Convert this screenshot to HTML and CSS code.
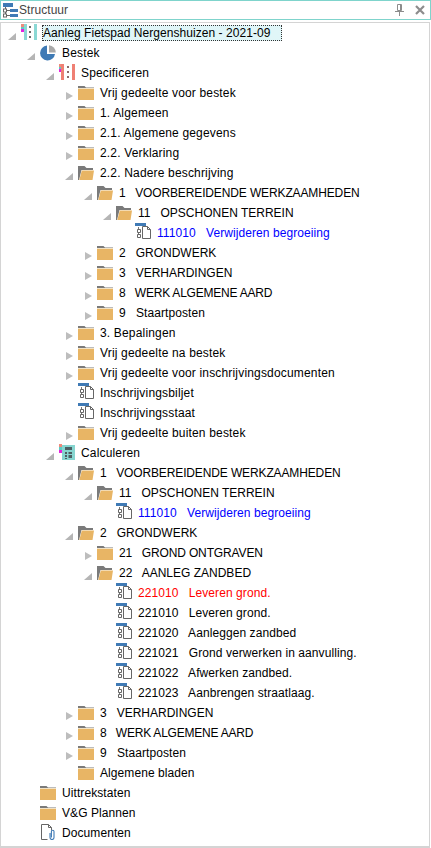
FILE: index.html
```html
<!DOCTYPE html>
<html lang="nl">
<head>
<meta charset="utf-8">
<title>Structuur</title>
<link rel="stylesheet" href="styles.css">
</head>
<body>
<svg class="defs" width="0" height="0">
  <defs>
    <symbol id="folder" viewBox="0 0 16 16">
      <path d="M0 1h6.500l1.500 1.500H16V3H0z" fill="#7a7a7a"/>
      <path d="M0 3h16v1H0z" fill="#f2e2c4"/>
      <path d="M0 4h16v11H0z" fill="#e8b565"/>
    </symbol>
    <symbol id="folder-open" viewBox="0 0 16 16">
      <path d="M0 1h6.500l2 2H15v2H3.500L1 15H0z" fill="#7a7a7a"/>
      <path d="M3.800 5.500H16L14.500 15H1.300z" fill="#e8b565"/>
    </symbol>
    <symbol id="doc" viewBox="0 0 16 16">
      <rect x="0" y="0" width="11" height="3" fill="#3f7ab5"/>
      <path d="M7.500 3.500h5l3 3v9h-8z" fill="#fff" stroke="#666"/>
      <path d="M12.500 3.500v3h3" fill="none" stroke="#666"/>
      <path d="M3.500 4v10" fill="none" stroke="#777"/>
      <path d="M2.500 6.500h3v3h-3zM2.500 11.500h3v3h-3z" fill="#fff" stroke="#666"/>
    </symbol>
    <symbol id="project" viewBox="0 0 16 16">
      <rect x="0" y="0" width="3" height="3" fill="#ef8a7c"/>
      <rect x="0" y="3" width="3" height="2" fill="#5fc9c3"/>
      <rect x="0" y="5" width="3" height="3" fill="#e61fe0"/>
      <rect x="3" y="0" width="3" height="16" fill="#8bd8d4"/>
      <rect x="13" y="0" width="3" height="16" fill="#8bd8d4"/>
      <rect x="8" y="2" width="2" height="2" fill="#6b6b6b"/>
      <rect x="8" y="7" width="2" height="2" fill="#6b6b6b"/>
      <rect x="8" y="12" width="2" height="2" fill="#6b6b6b"/>
    </symbol>
    <symbol id="spec" viewBox="0 0 16 16">
      <rect x="0" y="0" width="2" height="3" fill="#ef8a7c"/>
      <rect x="0" y="3" width="2" height="2" fill="#5fc9c3"/>
      <rect x="0" y="5" width="2" height="3" fill="#e61fe0"/>
      <rect x="2" y="0" width="3" height="16" fill="#ef8074"/>
      <rect x="13" y="0" width="3" height="16" fill="#ef8074"/>
      <rect x="8" y="2" width="2" height="2" fill="#8a6a6a"/>
      <rect x="8" y="7" width="2" height="2" fill="#8a6a6a"/>
      <rect x="8" y="12" width="2" height="2" fill="#8a6a6a"/>
    </symbol>
    <symbol id="pie" viewBox="0 0 16 16">
      <path d="M7 0.500A7.500 7.500 0 1 0 15 9H7z" fill="#3f7ab5"/>
      <path d="M9 0.200A7.500 7.500 0 0 1 15.800 7.500H9z" fill="#a9a9a9"/>
    </symbol>
    <symbol id="calc" viewBox="0 0 16 16">
      <rect x="0" y="0" width="3" height="3" fill="#ef8a7c"/>
      <rect x="0" y="3" width="3" height="3" fill="#5fc9c3"/>
      <rect x="0" y="6" width="3" height="3" fill="#e61fe0"/>
      <rect x="3" y="1" width="13" height="15" fill="#86d5d0"/>
      <rect x="6" y="3" width="7" height="3" fill="#4d5f63"/>
      <path d="M6 8h2v2H6zM9.500 8h3.500v2H9.500zM6 11h2v2H6zM9.500 11h3.500v3H9.500zM6 14h2v1H6z" fill="#4d5f63"/>
    </symbol>
    <symbol id="attach" viewBox="0 0 16 16">
      <path d="M1.500 15.500v-15h7l3 3v3M8.500.5v3h3M1.500 15.500h6" fill="none" stroke="#666"/>
      <path d="M10 9v4.500a2 2 0 0 0 4 0V7.500a1.300 1.300 0 0 0-2.600 0v6" fill="none" stroke="#3f7ab5" stroke-width="1.100"/>
    </symbol>
  </defs>
</svg>

<main class="panel">
  <header class="titlebar">
    <svg class="title-icon" width="16" height="17" viewBox="0 0 16 17">
      <rect x="1" y="1" width="10" height="4" fill="#3f7ab5"/>
      <rect x="8" y="7" width="8" height="3" fill="#3f7ab5"/>
      <rect x="8" y="12" width="8" height="3" fill="#3f7ab5"/>
      <path d="M3.500 5v9M3.500 8.500H8M3.500 13.500H8" fill="none" stroke="#666"/>
      <rect x="1.500" y="7" width="3" height="3" fill="#fff" stroke="#666"/>
      <rect x="1.500" y="12" width="3" height="3" fill="#fff" stroke="#666"/>
    </svg>
    <span class="title-text">Structuur</span>
    <svg class="pin" width="9" height="12" viewBox="0 0 9 12">
      <path d="M2.500.5h4v6h-4zM0 7.500h9M4.500 8v4M5.500 1v5" fill="none" stroke="#8c8c8c"/>
    </svg>
    <svg class="close" width="10" height="10" viewBox="0 0 10 10">
      <path d="M1 1l8 8M9 1L1 9" fill="none" stroke="#8c8c8c" stroke-width="2.200"/>
    </svg>
  </header>

  <section class="tree">
    <div class="row l0"><i class="tw open"></i><svg class="ic up1"><use href="#project"/></svg><span class="label selected">Aanleg Fietspad Nergenshuizen - 2021-09</span></div>
    <div class="row l1"><i class="tw open"></i><svg class="ic"><use href="#pie"/></svg><span class="label">Bestek</span></div>
    <div class="row l2"><i class="tw open"></i><svg class="ic up1"><use href="#spec"/></svg><span class="label">Specificeren</span></div>
    <div class="row l3"><i class="tw shut"></i><svg class="ic"><use href="#folder"/></svg><span class="label">Vrij gedeelte voor bestek</span></div>
    <div class="row l3"><i class="tw shut"></i><svg class="ic"><use href="#folder"/></svg><span class="label">1. Algemeen</span></div>
    <div class="row l3"><i class="tw shut"></i><svg class="ic"><use href="#folder"/></svg><span class="label">2.1. Algemene gegevens</span></div>
    <div class="row l3"><i class="tw shut"></i><svg class="ic"><use href="#folder"/></svg><span class="label">2.2. Verklaring</span></div>
    <div class="row l3"><i class="tw open"></i><svg class="ic"><use href="#folder-open"/></svg><span class="label">2.2. Nadere beschrijving</span></div>
    <div class="row l4"><i class="tw open"></i><svg class="ic"><use href="#folder-open"/></svg><span class="label tight">1   VOORBEREIDENDE WERKZAAMHEDEN</span></div>
    <div class="row l5"><i class="tw open"></i><svg class="ic"><use href="#folder-open"/></svg><span class="label caps">11   OPSCHONEN TERREIN</span></div>
    <div class="row l6"><i class="tw"></i><svg class="ic up2"><use href="#doc"/></svg><span class="label item blue">111010   Verwijderen begroeiing</span></div>
    <div class="row l4"><i class="tw shut"></i><svg class="ic"><use href="#folder"/></svg><span class="label caps">2   GRONDWERK</span></div>
    <div class="row l4"><i class="tw shut"></i><svg class="ic"><use href="#folder"/></svg><span class="label caps">3   VERHARDINGEN</span></div>
    <div class="row l4"><i class="tw shut"></i><svg class="ic"><use href="#folder"/></svg><span class="label tighter">8   WERK ALGEMENE AARD</span></div>
    <div class="row l4"><i class="tw shut"></i><svg class="ic"><use href="#folder"/></svg><span class="label item">9   Staartposten</span></div>
    <div class="row l3"><i class="tw shut"></i><svg class="ic"><use href="#folder"/></svg><span class="label">3. Bepalingen</span></div>
    <div class="row l3"><i class="tw shut"></i><svg class="ic"><use href="#folder"/></svg><span class="label">Vrij gedeelte na bestek</span></div>
    <div class="row l3"><i class="tw shut"></i><svg class="ic"><use href="#folder"/></svg><span class="label">Vrij gedeelte voor inschrijvingsdocumenten</span></div>
    <div class="row l3"><i class="tw"></i><svg class="ic up2"><use href="#doc"/></svg><span class="label">Inschrijvingsbiljet</span></div>
    <div class="row l3"><i class="tw"></i><svg class="ic up2"><use href="#doc"/></svg><span class="label">Inschrijvingsstaat</span></div>
    <div class="row l3"><i class="tw shut"></i><svg class="ic"><use href="#folder"/></svg><span class="label">Vrij gedeelte buiten bestek</span></div>
    <div class="row l2"><i class="tw open"></i><svg class="ic up1"><use href="#calc"/></svg><span class="label">Calculeren</span></div>
    <div class="row l3"><i class="tw open"></i><svg class="ic"><use href="#folder-open"/></svg><span class="label tight">1   VOORBEREIDENDE WERKZAAMHEDEN</span></div>
    <div class="row l4"><i class="tw open"></i><svg class="ic"><use href="#folder-open"/></svg><span class="label caps">11   OPSCHONEN TERREIN</span></div>
    <div class="row l5"><i class="tw"></i><svg class="ic up2"><use href="#doc"/></svg><span class="label item blue">111010   Verwijderen begroeiing</span></div>
    <div class="row l3"><i class="tw open"></i><svg class="ic"><use href="#folder-open"/></svg><span class="label caps">2   GRONDWERK</span></div>
    <div class="row l4"><i class="tw shut"></i><svg class="ic"><use href="#folder"/></svg><span class="label tight">21   GROND ONTGRAVEN</span></div>
    <div class="row l4"><i class="tw open"></i><svg class="ic"><use href="#folder-open"/></svg><span class="label caps">22   AANLEG ZANDBED</span></div>
    <div class="row l5"><i class="tw"></i><svg class="ic up2"><use href="#doc"/></svg><span class="label item red">221010   Leveren grond.</span></div>
    <div class="row l5"><i class="tw"></i><svg class="ic up2"><use href="#doc"/></svg><span class="label item">221010   Leveren grond.</span></div>
    <div class="row l5"><i class="tw"></i><svg class="ic up2"><use href="#doc"/></svg><span class="label item">221020   Aanleggen zandbed</span></div>
    <div class="row l5"><i class="tw"></i><svg class="ic up2"><use href="#doc"/></svg><span class="label item">221021   Grond verwerken in aanvulling.</span></div>
    <div class="row l5"><i class="tw"></i><svg class="ic up2"><use href="#doc"/></svg><span class="label item">221022   Afwerken zandbed.</span></div>
    <div class="row l5"><i class="tw"></i><svg class="ic up2"><use href="#doc"/></svg><span class="label item">221023   Aanbrengen straatlaag.</span></div>
    <div class="row l3"><i class="tw shut"></i><svg class="ic"><use href="#folder"/></svg><span class="label caps">3   VERHARDINGEN</span></div>
    <div class="row l3"><i class="tw shut"></i><svg class="ic"><use href="#folder"/></svg><span class="label tighter">8   WERK ALGEMENE AARD</span></div>
    <div class="row l3"><i class="tw shut"></i><svg class="ic"><use href="#folder"/></svg><span class="label item">9   Staartposten</span></div>
    <div class="row l3"><i class="tw"></i><svg class="ic"><use href="#folder"/></svg><span class="label item">Algemene bladen</span></div>
    <div class="row l1"><i class="tw"></i><svg class="ic"><use href="#folder"/></svg><span class="label item">Uittrekstaten</span></div>
    <div class="row l1"><i class="tw"></i><svg class="ic"><use href="#folder"/></svg><span class="label item">V&amp;G Plannen</span></div>
    <div class="row l1"><i class="tw"></i><svg class="ic up1"><use href="#attach"/></svg><span class="label item">Documenten</span></div>
  </section>
</main>
</body>
</html>
```
FILE: styles.css
```css
* { box-sizing: border-box; }
html, body { margin: 0; padding: 0; }
body {
  width: 431px;
  height: 848px;
  background: #fff;
  overflow: hidden;
  font-family: "Liberation Sans", Arial, sans-serif;
  font-size: 12px;
  color: #000;
}
.defs { position: absolute; }
.panel { display: flex; flex-direction: column; height: 848px; gap: 2px; }
.titlebar {
  display: flex;
  align-items: center;
  height: 20px;
  border: 1px solid #7fd4cc;
  padding: 0 5px 0 1px;
}
.title-icon { margin-right: 1px; }
.title-text { flex: 1; color: #444; letter-spacing: .05px; }
.pin { margin-right: 11px; }
.tree {
  flex: 1;
  margin-right: 1px;
  border: 1px solid #d4d4d4;
  border-bottom-width: 2px;
  overflow: hidden;
}
.row { display: flex; align-items: center; height: 20px; padding-left: 6px; }
.l1 { padding-left: 25px; }
.l2 { padding-left: 44px; }
.l3 { padding-left: 63px; }
.l4 { padding-left: 82px; }
.l5 { padding-left: 101px; }
.l6 { padding-left: 120px; }
.tw { flex: none; width: 14px; height: 16px; position: relative; }
.tw.shut::before {
  content: "";
  position: absolute;
  left: 2px;
  top: 7px;
  border-left: 7px solid #bdbdbd;
  border-top: 4px solid transparent;
  border-bottom: 4px solid transparent;
}
.tw.open::before {
  content: "";
  position: absolute;
  left: 1px;
  top: 8px;
  border-right: 8px solid #b5b5b5;
  border-top: 7px solid transparent;
}
.ic { flex: none; width: 16px; height: 16px; }
.up1 { margin-bottom: 2px; }
.up2 { margin-bottom: 4px; }
.label { margin-left: 6px; white-space: pre; line-height: 16px; letter-spacing: .17px; }
.item { letter-spacing: .08px; }
.caps { letter-spacing: 0; }
.tight { letter-spacing: -.13px; }
.tighter { letter-spacing: -.22px; }
.selected {
  margin-left: 5px;
  padding: 0 4px 0 1px;
  width: 240px;
  letter-spacing: .05px;
  background: #e0f6f8;
  outline: 1px dotted #333;
  outline-offset: -1px;
}
.blue { color: #0000ff; }
.red { color: #ff0000; }
```
